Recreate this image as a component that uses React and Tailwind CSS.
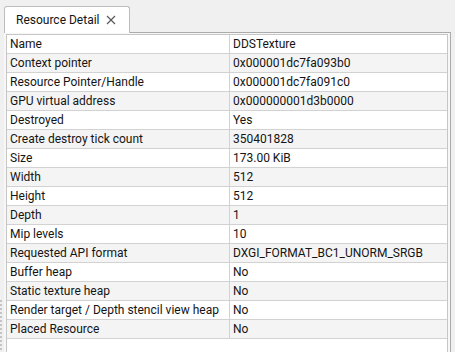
import React from 'react';

const rows = [
  ['Name', 'DDSTexture'],
  ['Context pointer', '0x000001dc7fa093b0'],
  ['Resource Pointer/Handle', '0x000001dc7fa091c0'],
  ['GPU virtual address', '0x000000001d3b0000'],
  ['Destroyed', 'Yes'],
  ['Create destroy tick count', '350401828'],
  ['Size', '173.00 KiB'],
  ['Width', '512'],
  ['Height', '512'],
  ['Depth', '1'],
  ['Mip levels', '10'],
  ['Requested API format', 'DXGI_FORMAT_BC1_UNORM_SRGB'],
  ['Buffer heap', 'No'],
  ['Static texture heap', 'No'],
  ['Render target / Depth stencil view heap', 'No'],
  ['Placed Resource', 'No'],
];

export default function App() {
  return (
    <div
      className="relative w-[455px] h-[352px] overflow-hidden bg-[#f0f0f0] text-[12px] text-[#141414]"
      style={{ fontFamily: 'Roboto, "Liberation Sans", sans-serif' }}
    >
      {/* resize grip */}
      <div className="absolute left-0 top-[300px] flex flex-col gap-[2px]">
        {Array.from({ length: 14 }).map((_, i) => (
          <div key={i} className="w-[2px] h-[2px] bg-[#c4c4c4]" />
        ))}
      </div>

      <div className="pl-[4px] pt-[6px] pr-[4px]">
        <div className="relative z-10 -mb-px flex h-[27px] w-[126px] items-center rounded-t-[3px] border border-b-0 border-[#bcbcbc] bg-white pl-[11px]">
          <span>Resource Detail</span>
          <svg className="ml-[6px]" width="10" height="10" viewBox="0 0 10 10">
            <path d="M1 1 L9 9 M9 1 L1 9" stroke="#5a5a5a" strokeWidth="1.2" fill="none" />
          </svg>
        </div>

        <div className="h-[320px] border-t border-r border-[#ababab] bg-[#f7f7f7] pl-[2px] pt-px pr-[2px]">
          <div className="h-full border-l border-t border-r border-[#c6c6c6] bg-white">
            {rows.map(([k, v], i) => (
              <div
                key={k}
                className={`flex h-[19px] border-b border-[#d2d2d2] ${i % 2 ? 'bg-[#f4f4f4]' : 'bg-white'}`}
              >
                <div className="flex w-[223px] items-center border-r border-[#d2d2d2] pl-[3px] whitespace-nowrap">
                  {k}
                </div>
                <div className="flex flex-1 items-center pl-[3px] whitespace-nowrap">{v}</div>
              </div>
            ))}
          </div>
        </div>
      </div>
    </div>
  );
}
